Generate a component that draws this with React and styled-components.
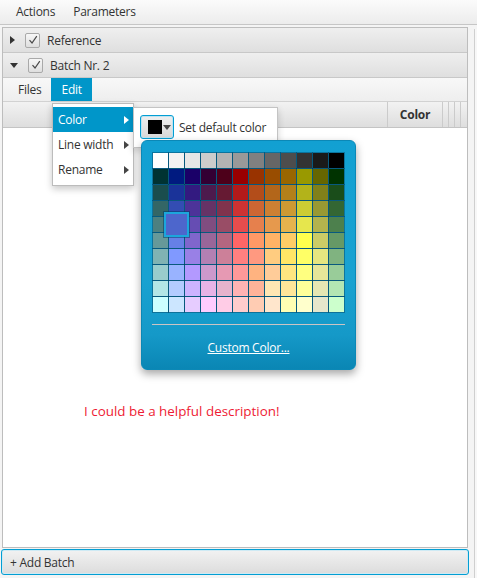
import styled, { createGlobalStyle } from "styled-components";

const FONT = `"Open Sans", "Noto Sans", "DejaVu Sans", sans-serif`;

const GlobalStyle = createGlobalStyle`
  html, body {
    margin: 0;
    padding: 0;
    background: #f4f4f4;
  }
  body {
    font-family: ${FONT};
    font-size: 12px;
    letter-spacing: -0.25px;
    color: #333;
  }
  * {
    box-sizing: border-box;
  }
`;

// javafx colour palette, 12 columns x 10 rows
const PALETTE = [
  [[255,255,255],[242,242,242],[230,230,230],[204,204,204],[179,179,179],[153,153,153],[128,128,128],[102,102,102],[77,77,77],[51,51,51],[26,26,26],[0,0,0]],
  [[0,51,51],[0,26,128],[26,0,104],[51,0,51],[77,0,26],[153,0,0],[153,51,0],[153,77,0],[153,102,0],[153,153,0],[102,102,0],[0,51,0]],
  [[26,77,77],[26,51,153],[51,26,128],[77,26,77],[102,26,51],[179,26,26],[179,77,26],[179,102,26],[179,128,26],[179,179,26],[128,128,26],[26,77,26]],
  [[51,102,102],[51,77,179],[77,51,153],[102,51,102],[128,51,77],[204,51,51],[204,102,51],[204,128,51],[204,153,51],[204,204,51],[153,153,51],[51,102,51]],
  [[77,128,128],[77,102,204],[102,77,179],[128,77,128],[153,77,102],[230,77,77],[230,128,77],[230,153,77],[230,179,77],[230,230,77],[179,179,77],[77,128,77]],
  [[102,153,153],[102,128,230],[128,102,204],[153,102,153],[179,102,128],[255,102,102],[255,153,102],[255,179,102],[255,204,102],[255,255,77],[204,204,102],[102,153,102]],
  [[128,179,179],[128,153,255],[153,128,230],[179,128,179],[204,128,153],[255,128,128],[255,153,128],[255,204,128],[255,230,102],[255,255,102],[230,230,128],[128,179,128]],
  [[153,204,204],[153,179,255],[179,153,255],[204,153,204],[230,153,179],[255,153,153],[255,179,128],[255,204,153],[255,230,128],[255,255,128],[230,230,153],[153,204,153]],
  [[179,230,230],[179,204,255],[204,179,255],[230,179,230],[230,179,204],[255,179,179],[255,179,153],[255,230,179],[255,230,153],[255,255,153],[230,230,179],[179,230,179]],
  [[204,255,255],[204,230,255],[230,204,255],[255,204,255],[255,204,230],[255,204,204],[255,204,179],[255,230,204],[255,255,179],[255,255,204],[230,230,204],[204,255,204]],
];

const rgb = (c) => `rgb(${c[0]}, ${c[1]}, ${c[2]})`;

function Triangle({ dir = "right", color = "#333" }) {
  if (dir === "down") {
    return (
      <svg width="8" height="5" viewBox="0 0 8 5">
        <path d="M0 0 L8 0 L4 5 Z" fill={color} />
      </svg>
    );
  }
  return (
    <svg width="5" height="8" viewBox="0 0 5 8">
      <path d="M0 0 L5 4 L0 8 Z" fill={color} />
    </svg>
  );
}

function Check() {
  return (
    <CheckBox>
      <svg width="12" height="12" viewBox="0 0 12 12">
        <path d="M2.5 6.2 L5 9 L9.8 2.2" fill="none" stroke="#4a4a4a" strokeWidth="1.2" />
      </svg>
    </CheckBox>
  );
}

export default function App() {
  return (
    <>
      <GlobalStyle />
      <Window>
        <MenuBar>
          <MenuItem>Actions</MenuItem>
          <MenuItem>Parameters</MenuItem>
        </MenuBar>
        <Body>
          <MainCol>
            <Panel>
              <TitleBar>
                <Triangle dir="right" />
                <Check />
                <TitleText>Reference</TitleText>
              </TitleBar>
              <TitleBar>
                <Triangle dir="down" />
                <Check />
                <TitleText>Batch Nr. 2</TitleText>
              </TitleBar>
              <BatchBar>
                <BatchItem>Files</BatchItem>
                <BatchItem $active>Edit</BatchItem>
              </BatchBar>
              <HeaderRow>
                <HeaderCell $grow />
                <HeaderCell $width={55}>Color</HeaderCell>
                <HeaderCell $width={6} />
                <HeaderCell $width={6} />
                <HeaderCell $width={6} />
                <HeaderCell $width={6} $last />
              </HeaderRow>
              <TableBody>
                <Description>I could be a helpful description!</Description>
              </TableBody>
            </Panel>
            <AddButton>+ Add Batch</AddButton>
          </MainCol>
          <SideStrip />
        </Body>

        <ContextMenu>
          <ContextItem $active>
            <span>Color</span>
            <Triangle color="#fff" />
          </ContextItem>
          <ContextItem>
            <span>Line width</span>
            <Triangle color="#444" />
          </ContextItem>
          <ContextItem>
            <span>Rename</span>
            <Triangle color="#444" />
          </ContextItem>
        </ContextMenu>

        <SubMenu>
          <PickerButton>
            <PickerSwatch />
            <Triangle dir="down" color="#444" />
          </PickerButton>
          <span>Set default color</span>
        </SubMenu>

        <PalettePopup>
          <GridWrap>
            <Grid>
              {PALETTE.flat().map((c, i) => (
                <Swatch key={i} style={{ background: rgb(c) }} />
              ))}
            </Grid>
            <HoverSwatch style={{ background: rgb(PALETTE[4][1]) }} />
          </GridWrap>
          <Separator />
          <CustomLink>Custom Color...</CustomLink>
        </PalettePopup>
      </Window>
    </>
  );
}

const Window = styled.div`
  position: relative;
  width: 477px;
  height: 578px;
  display: flex;
  flex-direction: column;
  overflow: hidden;
  background: #f4f4f4;
`;

const MenuBar = styled.div`
  height: 25px;
  display: flex;
  align-items: center;
  gap: 2px;
  padding-left: 8px;
  border-bottom: 1px solid #c6c6c6;
  background: linear-gradient(#fbfbfb, #ececec);
`;

const MenuItem = styled.div`
  padding: 0 8px;
  line-height: 24px;
`;

const Body = styled.div`
  flex: 1;
  display: flex;
  min-height: 0;
`;

const MainCol = styled.div`
  width: 469px;
  display: flex;
  flex-direction: column;
  padding: 2px 0 3px 1px;
`;

const SideStrip = styled.div`
  flex: 1;
  margin-top: 4px;
  background: linear-gradient(to right, #f4f4f4 0 5px, #cfcfcf 5px 6px, #f7f7f7 6px);
`;

const Panel = styled.div`
  flex: 1;
  margin: 0 1px;
  display: flex;
  flex-direction: column;
  border: 1px solid #bdbdbd;
  background: #fff;
  min-height: 0;
`;

const TitleBar = styled.div`
  height: 25px;
  display: flex;
  align-items: center;
  padding-left: 7px;
  border-bottom: 1px solid #c8c8c8;
  background: linear-gradient(#efefef, #dfdfdf);
`;

const CheckBox = styled.div`
  width: 15px;
  height: 15px;
  margin-left: 10px;
  display: flex;
  align-items: center;
  justify-content: center;
  border: 1px solid #a9a9a9;
  border-radius: 2px;
  background: linear-gradient(#f7f7f7, #dedede);
`;

const TitleText = styled.span`
  margin-left: 7px;
`;

const BatchBar = styled.div`
  height: 24px;
  display: flex;
  padding-left: 5px;
  border-bottom: 1px solid #d2d2d2;
  background: linear-gradient(#f8f8f8, #eeeeee);
`;

const BatchItem = styled.div`
  padding: 0 10px;
  line-height: 23px;
  background: ${(p) => (p.$active ? "#0096c9" : "transparent")};
  color: ${(p) => (p.$active ? "#fff" : "#333")};
`;

const HeaderRow = styled.div`
  height: 26px;
  display: flex;
  border-bottom: 1px solid #c4c4c4;
`;

const HeaderCell = styled.div`
  flex: ${(p) => (p.$grow ? "1 1 auto" : "none")};
  width: ${(p) => (p.$width ? `${p.$width}px` : "auto")};
  display: flex;
  align-items: center;
  justify-content: center;
  font-weight: bold;
  border-right: ${(p) => (p.$last ? "none" : "1px solid #cbcbcb")};
  background: linear-gradient(#f2f2f2, #dedede);
`;

const TableBody = styled.div`
  flex: 1;
  background: #fff;
  padding: 274px 0 0 81px;
`;

const Description = styled.div`
  font-size: 13.4px;
  letter-spacing: 0;
  line-height: 18px;
  color: #ee1b34;
`;

const AddButton = styled.button`
  height: 26px;
  margin-top: 1px;
  padding: 0 0 0 8px;
  text-align: left;
  font-family: ${FONT};
  font-size: 12px;
  letter-spacing: -0.25px;
  color: #333;
  border: 1px solid #039ed3;
  border-radius: 3px;
  box-shadow: inset 0 0 0 1px #cfeaf4;
  background: linear-gradient(#f2f2f2, #dcdcdc);
`;

const ContextMenu = styled.div`
  position: absolute;
  left: 52px;
  top: 103px;
  width: 82px;
  padding: 3px 0;
  background: #fff;
  border: 1px solid #bcbcbc;
  box-shadow: 0 3px 7px rgba(0, 0, 0, 0.22);
`;

const ContextItem = styled.div`
  height: 25px;
  display: flex;
  align-items: center;
  justify-content: space-between;
  padding: 0 4px 0 5px;
  background: ${(p) => (p.$active ? "#0096c9" : "transparent")};
  color: ${(p) => (p.$active ? "#fff" : "#333")};
`;

const SubMenu = styled.div`
  position: absolute;
  left: 133px;
  top: 107px;
  width: 145px;
  display: flex;
  align-items: center;
  gap: 5px;
  padding: 7px 6px 8px;
  background: #fff;
  border: 1px solid #c4c4c4;
  box-shadow: 0 3px 7px rgba(0, 0, 0, 0.18);
`;

const PickerButton = styled.div`
  width: 34px;
  height: 24px;
  display: flex;
  align-items: center;
  gap: 1px;
  padding-left: 7px;
  border: 1px solid #039ed3;
  border-radius: 3px;
  box-shadow: inset 0 0 0 1px #bfe3f1;
  background: linear-gradient(#efefef, #d8d8d8);
`;

const PickerSwatch = styled.div`
  width: 14px;
  height: 14px;
  background: #000;
`;

const PalettePopup = styled.div`
  position: absolute;
  left: 141px;
  top: 140px;
  width: 215px;
  padding: 12px 11px 13px;
  border: 1px solid #0b88b6;
  border-radius: 6px;
  background: linear-gradient(#12a0d2 0%, #19a2d1 60%, #1599c8 85%, #0a86b4 100%);
  box-shadow: 0 4px 9px rgba(0, 0, 0, 0.35);
`;

const GridWrap = styled.div`
  position: relative;
`;

const Grid = styled.div`
  display: grid;
  grid-template-columns: repeat(12, 15px);
  grid-auto-rows: 15px;
  gap: 1px;
`;

const Swatch = styled.div`
  box-shadow: 0 0 0 1px rgba(0, 50, 80, 0.4);
`;

const HoverSwatch = styled.div`
  position: absolute;
  left: 11px;
  top: 59px;
  width: 25px;
  height: 25px;
  border: 2px solid #1ca6dc;
  box-shadow: 0 0 0 1px rgba(0, 60, 100, 0.5);
`;

const Separator = styled.div`
  height: 1px;
  margin: 12px -1px 0;
  background: #cbc4c4;
`;

const CustomLink = styled.div`
  margin-top: 15px;
  line-height: 16px;
  text-align: center;
  color: #fff;
  text-decoration: underline;
`;
